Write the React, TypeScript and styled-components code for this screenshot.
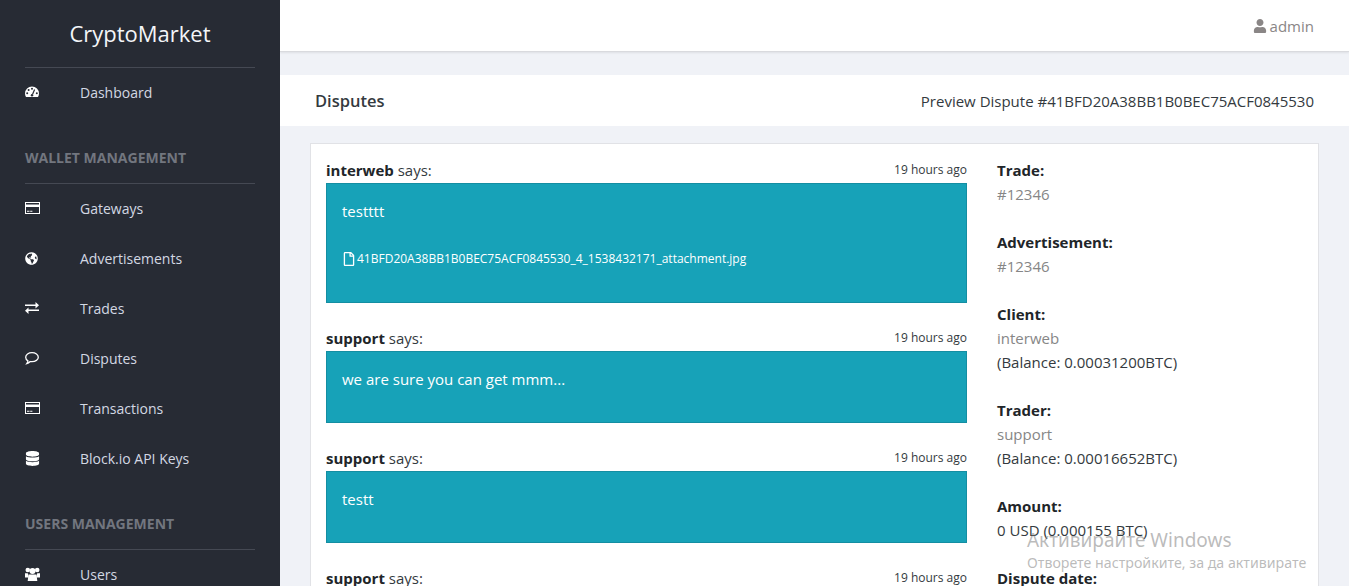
import React from 'react';
import styled, { createGlobalStyle } from 'styled-components';
import { FaDatabase, FaGlobeAmericas, FaRegFile, FaUser } from 'react-icons/fa';

const GlobalStyle = createGlobalStyle`
  html, body {
    margin: 0;
    padding: 0;
    height: 100%;
    overflow: hidden;
    background: #f0f2f7;
    font-family: "Open Sans", "Noto Sans", sans-serif;
    font-size: 15px;
  }
  * {
    box-sizing: border-box;
  }
`;

const Page = styled.div`
  display: flex;
  height: 586px;
  overflow: hidden;
  position: relative;
`;

const Sidebar = styled.aside`
  width: 280px;
  flex-shrink: 0;
  background: #272b34;
  padding: 0 25px;
  overflow: hidden;
`;

const Brand = styled.div`
  height: 68px;
  border-bottom: 1px solid #454953;
  color: #f4f6f9;
  font-size: 22px;
  line-height: 66px;
  text-align: center;
`;

const NavList = styled.nav`
  display: flex;
  flex-direction: column;
`;

const NavItem = styled.a`
  display: flex;
  align-items: center;
  flex-shrink: 0;
  height: 50px;
  padding-bottom: 2px;
  color: #d3d8e3;
  font-size: 14px;
`;

const NavIcon = styled.span`
  width: 55px;
  display: flex;
  align-items: center;
  color: #fff;
  font-size: 14px;
`;

const Section = styled.div`
  flex-shrink: 0;
  height: 50px;
  margin-top: 16px;
  border-bottom: 1px solid #454953;
  color: #72767f;
  font-size: 14px;
  font-weight: 700;
  line-height: 48px;
  text-transform: uppercase;
`;

const Main = styled.main`
  flex: 1;
  min-width: 0;
  overflow: hidden;
`;

const Topbar = styled.header`
  height: 52px;
  background: #fff;
  border-bottom: 1px solid #d9dade;
  box-shadow: 0 1px 2px rgba(0, 0, 0, 0.08);
  display: flex;
  align-items: center;
  justify-content: flex-end;
  padding: 0 35px 0 0;
`;

const UserLink = styled.a`
  display: flex;
  align-items: center;
  gap: 3px;
  color: #8a8686;
  font-size: 15px;
`;

const TitleBar = styled.div`
  height: 51px;
  margin-top: 23px;
  background: #fff;
  display: flex;
  align-items: center;
  justify-content: space-between;
  padding: 0 35px;
`;

const PageTitle = styled.h1`
  margin: 0;
  color: #343a40;
  font-size: 16.5px;
  font-weight: 600;
`;

const Crumb = styled.div`
  color: #343a40;
  font-size: 15px;
`;

const Card = styled.section`
  margin: 17px 30px 0;
  background: #fff;
  border: 1px solid #e1e2e6;
  padding: 15px 15px 0;
  display: flex;
  gap: 30px;
`;

const Thread = styled.div`
  width: 641px;
  flex-shrink: 0;
`;

const MessageHead = styled.div`
  display: flex;
  align-items: flex-start;
  justify-content: space-between;
  height: 24px;
  color: #343a40;
  font-size: 15px;
  line-height: 23px;
`;

const Author = styled.strong`
  color: #212529;
  font-weight: 700;
`;

const Time = styled.span`
  color: #343a40;
  font-size: 12px;
  line-height: 22px;
`;

const Bubble = styled.div`
  background: #17a2b8;
  border: 1px solid #148ea2;
  color: #fff;
  font-size: 15px;
  line-height: 24px;
  padding: 15px;
  margin-bottom: 24px;
`;

const BubbleText = styled.p`
  margin: 0 0 16px;
`;

const Attachment = styled.a`
  display: flex;
  align-items: center;
  gap: 1px;
  color: #fff;
  font-size: 12px;
  margin: 24px 0 16px;
`;

const Details = styled.div`
  flex: 1;
  margin-top: -1px;
`;

const Detail = styled.div`
  color: #343a40;
  font-size: 15px;
  line-height: 24px;
  margin-bottom: 24px;
`;

const Label = styled.div`
  color: #212529;
  font-weight: 700;
`;

const Muted = styled.div`
  color: #868686;
`;

const Watermark = styled.div`
  position: absolute;
  left: 1027px;
  top: 528px;
  color: rgba(120, 120, 120, 0.5);
  font-family: "Noto Sans", sans-serif;
  pointer-events: none;
`;

const WatermarkTitle = styled.div`
  font-size: 19px;
  line-height: 24px;
`;

const WatermarkText = styled.div`
  font-size: 14.2px;
  line-height: 20px;
  margin-top: 1px;
`;

const DashboardIcon = () => (
  <svg width="14" height="12" viewBox="0 0 14 12">
    <path d="M7 .5A7 7 0 0 0 0 7.5c0 1.3.3 2.5 1 3.5h12c.7-1 1-2.2 1-3.5A7 7 0 0 0 7 .5z" fill="#fff" />
    <circle cx="2.2" cy="7.2" r="1" fill="#272b34" />
    <circle cx="3.6" cy="4" r="1" fill="#272b34" />
    <circle cx="7" cy="2.8" r="1" fill="#272b34" />
    <circle cx="11.8" cy="7.2" r="1" fill="#272b34" />
    <path d="M9.6 3.6 7.6 8.2" stroke="#272b34" strokeWidth="1.2" />
    <circle cx="7" cy="9.2" r="1.2" fill="#272b34" />
  </svg>
);

const CardIcon = () => (
  <svg width="15" height="12" viewBox="0 0 15 12">
    <path
      fillRule="evenodd"
      d="M0 0h15v12H0zM1 5v6h13V5zM1 1v1.5h13V1z"
      fill="#fff"
    />
    <path d="M2 8.8h2.5v1H2zM5.2 8.8h2.2v1H5.2z" fill="#fff" />
  </svg>
);

const TradesIcon = () => (
  <svg width="14" height="12" viewBox="0 0 14 12">
    <path d="M0 2.6h10.5V0L14 3.3l-3.5 3.3V4.1H0zM14 7.6H3.5V5.4L0 8.7 3.5 12V9.1H14z" fill="#fff" />
  </svg>
);

const CommentIcon = () => (
  <svg width="14" height="13" viewBox="0 0 14 13" fill="none">
    <path
      d="M7 .7c3.5 0 6.3 2 6.3 4.5S10.500 9.700 7 9.700c-.6 0-1.200 0-1.800-.2-.8.9-2 1.900-3.400 2.200.6-.8 1-1.600 1.100-2.800C1.600 8.100.7 6.700.7 5.200.7 2.700 3.500.7 7 .7z"
      stroke="#fff"
      strokeWidth="1.300"
    />
  </svg>
);

const UsersIcon = () => (
  <svg width="15" height="14" viewBox="0 0 15 14">
    <circle cx="2.800" cy="3" r="2.300" fill="#fff" />
    <circle cx="12.200" cy="3" r="2.300" fill="#fff" />
    <circle cx="7.500" cy="4" r="3" fill="#fff" />
    <path d="M0 6.200h2.800l1 4.300H0zM15 6.200h-2.800l-1 4.300H15z" fill="#fff" />
    <path d="M3.500 7.500h8l.8 6.500H2.700z" fill="#fff" />
  </svg>
);

const wallet = [
  { label: 'Gateways', icon: <CardIcon /> },
  { label: 'Advertisements', icon: <FaGlobeAmericas size={13} /> },
  { label: 'Trades', icon: <TradesIcon /> },
  { label: 'Disputes', icon: <CommentIcon /> },
  { label: 'Transactions', icon: <CardIcon /> },
  { label: 'Block.io API Keys', icon: <FaDatabase size={15} /> },
];

const messages = [
  { author: 'interweb', text: 'testttt', file: '41BFD20A38BB1B0BEC75ACF0845530_4_1538432171_attachment.jpg' },
  { author: 'support', text: 'we are sure you can get mmm...' },
  { author: 'support', text: 'testt' },
  { author: 'support', text: 'ok' },
];

export default function App() {
  return (
    <Page>
      <GlobalStyle />
      <Sidebar>
        <Brand>CryptoMarket</Brand>
        <NavList>
          <NavItem>
            <NavIcon><DashboardIcon /></NavIcon>
            Dashboard
          </NavItem>
          <Section>Wallet Management</Section>
          {wallet.map((item) => (
            <NavItem key={item.label}>
              <NavIcon>{item.icon}</NavIcon>
              {item.label}
            </NavItem>
          ))}
          <Section>Users Management</Section>
          <NavItem>
            <NavIcon><UsersIcon /></NavIcon>
            Users
          </NavItem>
        </NavList>
      </Sidebar>
      <Main>
        <Topbar>
          <UserLink>
            <FaUser size={14} />
            admin
          </UserLink>
        </Topbar>
        <TitleBar>
          <PageTitle>Disputes</PageTitle>
          <Crumb>Preview Dispute #41BFD20A38BB1B0BEC75ACF0845530</Crumb>
        </TitleBar>
        <Card>
          <Thread>
            {messages.map((m, i) => (
              <div key={i}>
                <MessageHead>
                  <span><Author>{m.author}</Author> says:</span>
                  <Time>19 hours ago</Time>
                </MessageHead>
                <Bubble>
                  <BubbleText>{m.text}</BubbleText>
                  {m.file && (
                    <Attachment>
                      <FaRegFile size={14} />
                      {m.file}
                    </Attachment>
                  )}
                </Bubble>
              </div>
            ))}
          </Thread>
          <Details>
            <Detail>
              <Label>Trade:</Label>
              <Muted>#12346</Muted>
            </Detail>
            <Detail>
              <Label>Advertisement:</Label>
              <Muted>#12346</Muted>
            </Detail>
            <Detail>
              <Label>Client:</Label>
              <Muted>interweb</Muted>
              (Balance: 0.00031200BTC)
            </Detail>
            <Detail>
              <Label>Trader:</Label>
              <Muted>support</Muted>
              (Balance: 0.00016652BTC)
            </Detail>
            <Detail>
              <Label>Amount:</Label>
              0 USD (0.000155 BTC)
            </Detail>
            <Detail>
              <Label>Dispute date:</Label>
            </Detail>
          </Details>
        </Card>
      </Main>
      <Watermark>
        <WatermarkTitle>Активирайте Windows</WatermarkTitle>
        <WatermarkText>Отворете настройките, за да активирате</WatermarkText>
      </Watermark>
    </Page>
  );
}
